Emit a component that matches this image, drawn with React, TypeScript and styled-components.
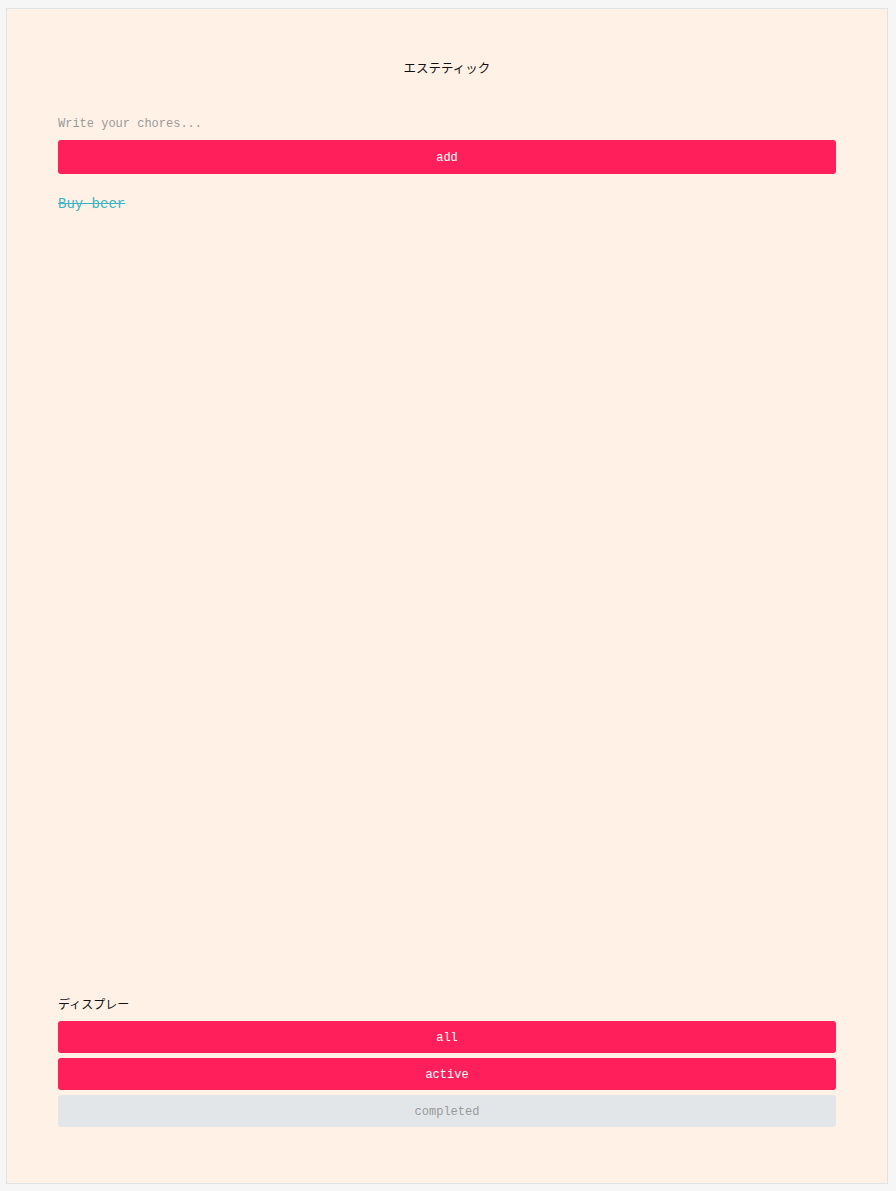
import { createGlobalStyle } from 'styled-components';
import styled from 'styled-components';

const GlobalStyle = createGlobalStyle`
  html, body { margin: 0; padding: 0; background: #f6f6f6; }
  body { padding: 8px 8px 7px 6px; font-family: "Liberation Sans", "Noto Sans CJK JP", sans-serif; }
  * { box-sizing: border-box; }
`;

const filters = ['all', 'active', 'completed'] as const;
const active = ['all', 'active'];

export default function App() {
  return (
    <>
      <GlobalStyle />
      <Card>
        <Title>エステティック</Title>
        <Form onSubmit={(e) => e.preventDefault()}>
          <Input placeholder="Write your chores..." />
          <Button type="submit" $on>add</Button>
        </Form>
        <List>
          <Item $done>Buy beer</Item>
        </List>
        <Footer>
          <Label>ディスプレー</Label>
          {filters.map((f) => (
            <FilterBtn key={f} type="button" $on={active.includes(f)}>{f}</FilterBtn>
          ))}
        </Footer>
      </Card>
    </>
  );
}

const Card = styled.div`
  display: flex; flex-direction: column;
  min-height: 1176px;
  padding: 52px 51px 56px;
  background: #fff1e6;
  border: 1px solid #e2e2e2;
`;
const Title = styled.h1`
  margin: 0; text-align: center;
  font-size: 12.5px; font-weight: 400; line-height: 16px; color: #111;
`;
const Form = styled.form`
  display: flex; flex-direction: column; gap: 6px;
  margin-top: 37px;
`;
const Input = styled.input`
  height: 20px; padding: 0; border: none; background: transparent; outline: none;
  font-family: "Liberation Mono", monospace; font-size: 12px; color: #333;
  &::placeholder { color: #9a9a9a; }
`;
const Button = styled.button<{ $on?: boolean }>`
  height: 34px; padding: 2px 0 0; border: none; border-radius: 3px; cursor: pointer;
  background: ${(p) => (p.$on ? '#ff1f5a' : '#e3e6e9')};
  color: ${(p) => (p.$on ? '#fff' : '#999')};
  font-family: "Liberation Mono", monospace; font-size: 12px;
`;
const FilterBtn = styled(Button)`height: 32px;`;
const List = styled.ul`
  list-style: none; margin: 21px 0 0; padding: 0;
`;
const Item = styled.li<{ $done?: boolean }>`
  font-family: "Liberation Mono", monospace; font-size: 14px; line-height: 18px;
  color: #3bb5c2;
  text-decoration: ${(p) => (p.$done ? 'line-through' : 'none')};
`;
const Footer = styled.div`
  display: flex; flex-direction: column; gap: 5px;
  margin-top: auto;
`;
const Label = styled.div`
  font-size: 12px; line-height: 16px; color: #111; margin-bottom: 3px;
`;
